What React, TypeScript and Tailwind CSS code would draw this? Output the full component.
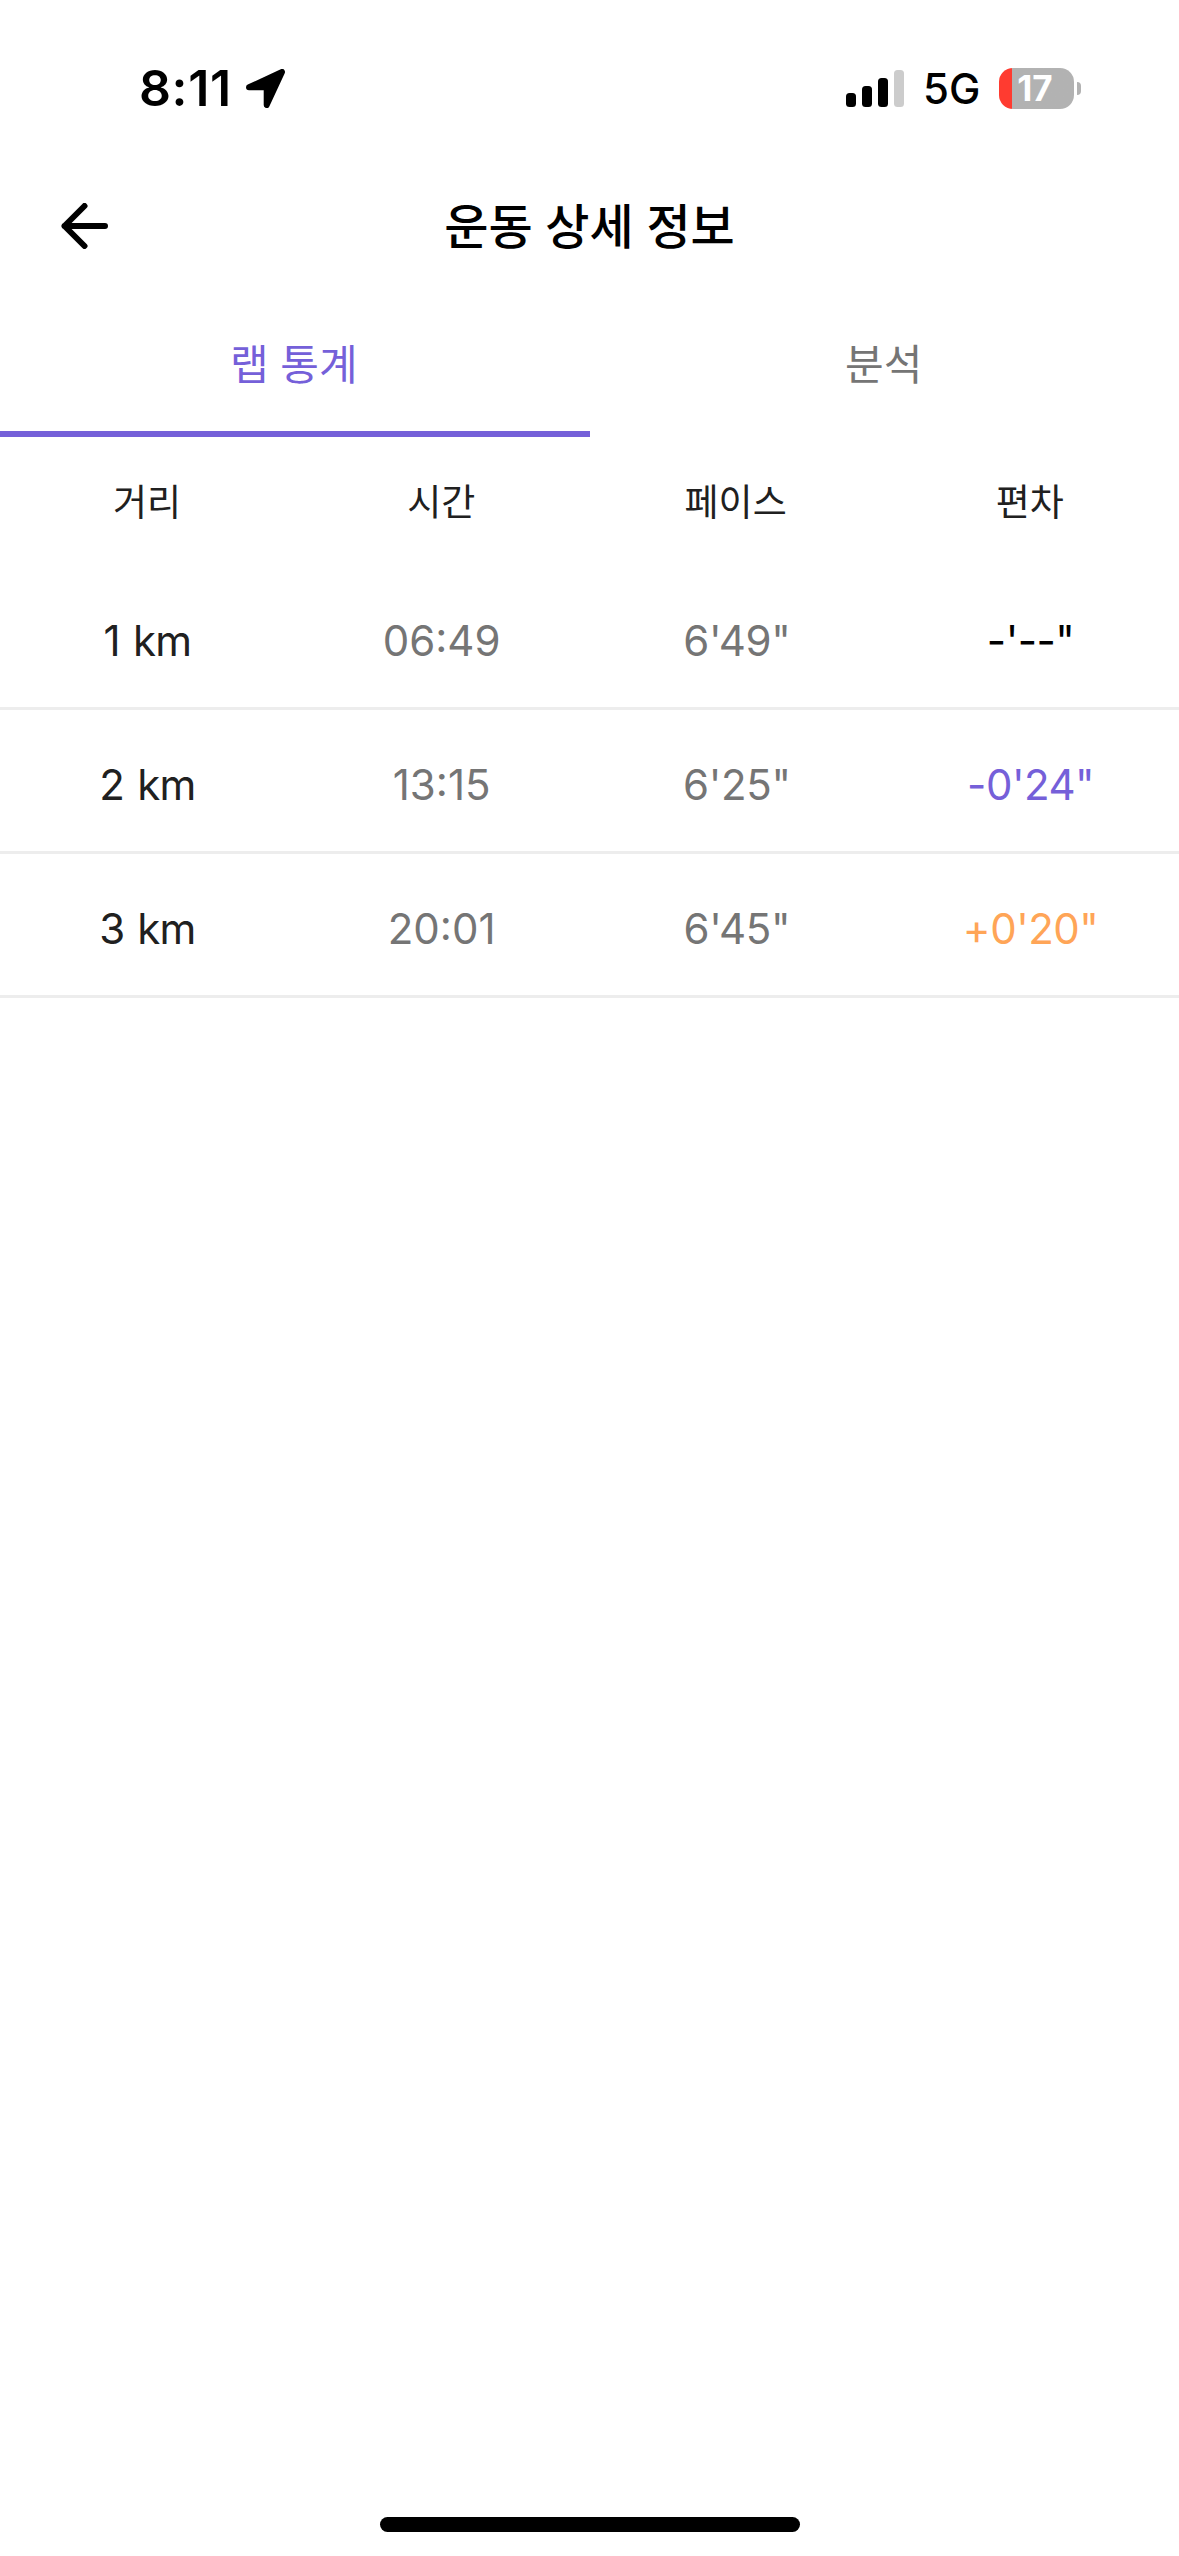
import React from "react";

const laps = [
  { distance: "1 km", time: "06:49", pace: "6'49\"", diff: "-'--\"", tone: "text-black" },
  { distance: "2 km", time: "13:15", pace: "6'25\"", diff: "-0'24\"", tone: "text-[#7560d9]" },
  { distance: "3 km", time: "20:01", pace: "6'45\"", diff: "+0'20\"", tone: "text-[#ffa557]" },
];

const columns = ["거리", "시간", "페이스", "편차"];

function StatusBar() {
  return (
    <header className="flex h-[176px] items-center justify-between pl-[139px] pr-[98px] text-black">
      <div className="flex items-center">
        <span className="w-[107px] text-[50px] font-semibold leading-none tracking-[0.6px]">8:11</span>
        <svg width="39" height="39" viewBox="0 0 39 39" className="mt-px">
          <path d="M3 18.3 36 3 20.7 36V18.3Z" stroke="#000" strokeWidth="6" strokeLinejoin="round" />
        </svg>
      </div>
      <div className="flex items-center">
        <svg width="58" height="37" viewBox="0 0 58 37">
          <rect x="0" y="23" width="10" height="14" rx="3.5" />
          <rect x="16" y="16" width="10" height="21" rx="3.5" />
          <rect x="32" y="8" width="10" height="29" rx="3.5" />
          <rect x="48" y="0" width="10" height="37" rx="3.5" fill="#ccc" />
        </svg>
        <span className="ml-[19px] mt-[2px] w-[76px] text-[42px] font-[450] leading-none">5G</span>
        <div className="flex h-[41px] w-[75px] items-center justify-center overflow-hidden rounded-[14px] bg-linear-to-r from-[#ff3b30] from-[13px] to-[#b2b2b2] to-[13px] pr-[3px] text-[35px] font-bold leading-none text-white">
          17
        </div>
        <div className="ml-[3px] h-[13px] w-[4px] rounded-r-full bg-[#b2b2b2]" />
      </div>
    </header>
  );
}

export default function App() {
  return (
    <main className="flex h-[2556px] w-[1179px] flex-col bg-white font-['Inter','Noto_Sans_CJK_KR',sans-serif] text-[#202020]">
      <StatusBar />
      <div className="grid h-[100px] grid-cols-[200px_1fr_200px] items-center text-black">
        <button aria-label="뒤로" className="ml-[61px] w-[47px]">
          <svg width="47" height="46" viewBox="0 0 47 46" fill="none" stroke="currentColor" strokeWidth="6" strokeLinecap="round" strokeLinejoin="round">
            <path d="M44 23H3.5M23.5 3 3.5 23l20 20" />
          </svg>
        </button>
        <h1 className="pt-[2px] text-center text-[48px] font-medium">운동 상세 정보</h1>
      </div>
      <nav className="mt-[40px] grid h-[121px] grid-cols-2 text-center text-[42px]">
        <span className="border-b-[6px] border-[#7560d9] pr-[2px] pt-[17px] text-[#7560d9]">랩 통계</span>
        <span className="pr-px pt-[17px] text-[#757575]">분석</span>
      </nav>
      <div className="grid h-[129px] grid-cols-4 items-center pr-[2px] pt-[3px] text-center text-[37px]">
        {columns.map((c) => (
          <span key={c}>{c}</span>
        ))}
      </div>
      {laps.map((l) => (
        <div key={l.distance} className="grid h-[144px] grid-cols-4 items-center border-b-[3px] border-[#ededed] pt-[8px] text-center text-[42px]">
          <span className="tracking-[-0.8px] [word-spacing:2px]">{l.distance}</span>
          <span className="pr-px text-[#757575]">{l.time}</span>
          <span className="tracking-[-0.3px] text-[#757575]">{l.pace}</span>
          <span className={`pr-[2px] tracking-[-0.5px] ${l.tone}`}>{l.diff}</span>
        </div>
      ))}
      <div className="mb-[24px] mt-auto h-[15px] w-[420px] self-center rounded-full bg-black" />
    </main>
  );
}
